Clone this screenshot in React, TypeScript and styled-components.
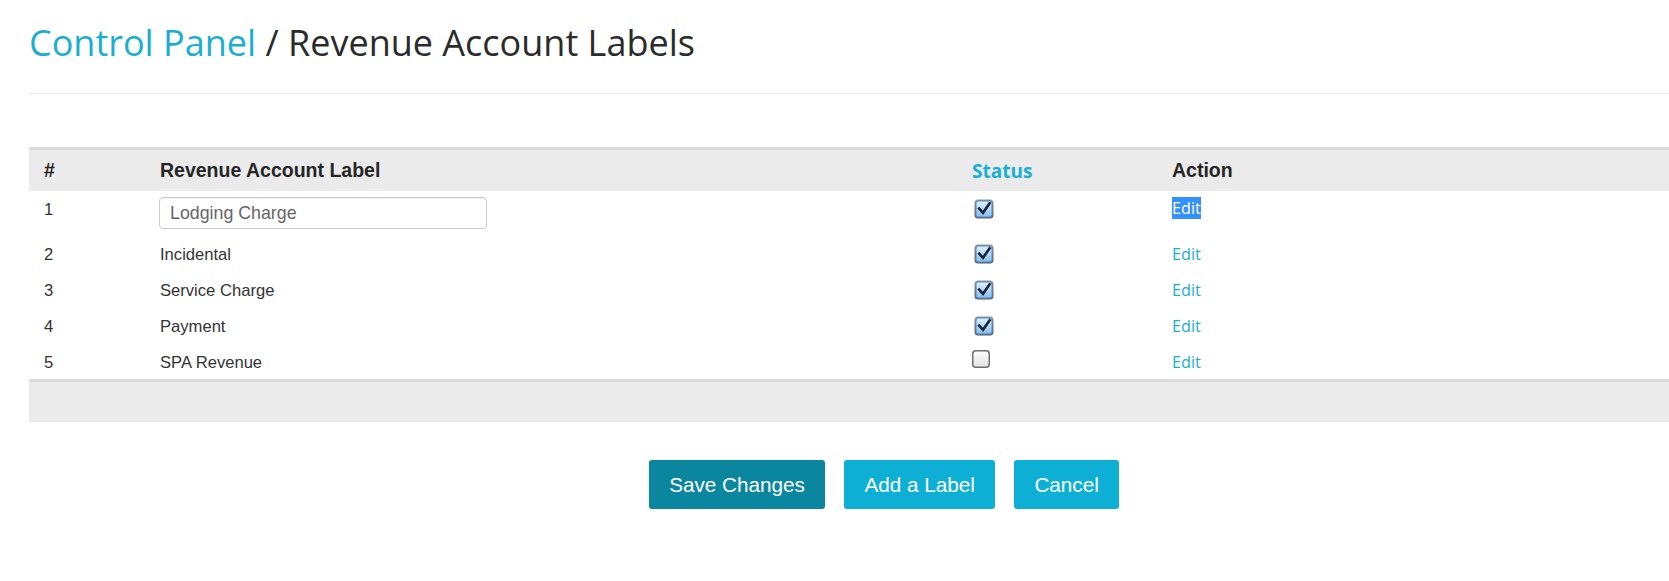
import React from "react";
import styled, { createGlobalStyle } from "styled-components";

const GlobalStyle = createGlobalStyle`
  html, body {
    margin: 0;
    padding: 0;
    background: #ffffff;
    overflow: hidden;
  }
  body {
    font-family: "Liberation Sans", Arial, sans-serif;
    color: #333333;
  }
  * { box-sizing: border-box; }
`;

const Page = styled.div`
  box-sizing: content-box;
  width: 1710px;
  padding: 23px 0 40px 29px;
`;

const Title = styled.h1`
  margin: 0;
  font-family: "Open Sans", sans-serif;
  font-weight: 400;
  font-size: 36px;
  line-height: 40px;
  color: #2b2b2b;
  white-space: nowrap;
`;

const Crumb = styled.span`
  color: #1aafd0;
`;

const Divider = styled.div`
  margin-top: 30px;
  height: 1px;
  background: #e7e7e7;
`;

const Table = styled.div`
  margin-top: 53px;
  border-top: 3px solid #dcdcdc;
`;

const Grid = styled.div<{ $top?: number; $bottom?: number }>`
  display: grid;
  grid-template-columns: 116px 812px 200px 1fr;
  padding: ${(p) => p.$top ?? 0}px 0 ${(p) => p.$bottom ?? 0}px;
`;

const HeadRow = styled(Grid)`
  height: 41px;
  align-items: center;
  background: #ebebeb;
`;

const HeadCell = styled.div<{ $accent?: boolean }>`
  padding: 0 15px;
  font-family: ${(p) => (p.$accent ? '"Open Sans", sans-serif' : '"Liberation Sans", Arial, sans-serif')};
  font-weight: 700;
  font-size: ${(p) => (p.$accent ? "19px" : "19.5px")};
  color: ${(p) => (p.$accent ? "#1aafd0" : "#262626")};
  white-space: nowrap;
`;

const BodyRow = styled(Grid)`
  align-items: start;
`;

const Cell = styled.div<{ $shift?: number }>`
  display: flex;
  align-items: flex-start;
  min-height: 22px;
  padding: ${(p) => p.$shift ?? 0}px 15px 0;
  font-size: 16.6px;
  line-height: 22px;
  color: #333333;
  white-space: nowrap;
`;

const LabelInput = styled.input`
  display: block;
  width: 328px;
  height: 32px;
  margin-left: -1px;
  padding: 0 10px;
  border: 1px solid #cccccc;
  border-radius: 4px;
  box-shadow: inset 0 1px 1px rgba(0, 0, 0, 0.075);
  font-family: "Liberation Sans", Arial, sans-serif;
  font-size: 17.8px;
  color: #666666;
  outline: none;
`;

const BoxWrap = styled.span<{ $checked: boolean }>`
  display: block;
  width: ${(p) => (p.$checked ? 20 : 18)}px;
  height: ${(p) => (p.$checked ? 20 : 18)}px;
  margin-top: ${(p) => (p.$checked ? 2 : 0)}px;
  margin-left: ${(p) => (p.$checked ? 2 : 0)}px;
`;

const EditLink = styled.a<{ $selected?: boolean }>`
  display: block;
  height: 22px;
  font-family: "Open Sans", sans-serif;
  font-size: 16.2px;
  line-height: 22px;
  color: ${(p) => (p.$selected ? "#ffffff" : "#1aafd0")};
  background: ${(p) => (p.$selected ? "#3390ff" : "transparent")};
  text-decoration: none;
  cursor: pointer;
`;

const Footer = styled.div`
  height: 43px;
  border-top: 3px solid #dcdcdc;
  background: #ebebeb;
`;

const Actions = styled.div`
  display: flex;
  justify-content: center;
  gap: 19.5px;
  margin-top: 38px;
`;

const Button = styled.button<{ $primary?: boolean }>`
  height: 49px;
  padding: 0 20px;
  border: none;
  border-radius: 3px;
  background: ${(p) => (p.$primary ? "#0a879f" : "#0db0d4")};
  color: #ffffff;
  font-family: "Liberation Sans", Arial, sans-serif;
  font-size: 20.7px;
  line-height: 49px;
  cursor: pointer;
  white-space: nowrap;
`;

const CheckBox: React.FC<{ checked: boolean }> = ({ checked }) => (
  <BoxWrap $checked={checked}>
    {checked ? (
      <svg width="20" height="20" viewBox="0 0 20 20">
        <defs>
          <linearGradient id="cbOuter" x1="0" y1="0" x2="0" y2="1">
            <stop offset="0" stopColor="#9a9a9a" />
            <stop offset="1" stopColor="#5c5c5c" />
          </linearGradient>
          <linearGradient id="cbInner" x1="0" y1="0" x2="0" y2="1">
            <stop offset="0" stopColor="#e2f1fd" />
            <stop offset="0.5" stopColor="#b4d9f7" />
            <stop offset="1" stopColor="#7fbcef" />
          </linearGradient>
        </defs>
        <rect x="0.5" y="0.5" width="19" height="19" rx="3.5" fill="url(#cbOuter)" />
        <rect x="2" y="2" width="16" height="16" rx="2" fill="url(#cbInner)" stroke="#4f86c6" strokeWidth="1" />
        <path d="M5.2 9.6 L9 13.8 L15.6 4.4" fill="none" stroke="#1c2333" strokeWidth="2.6" strokeLinecap="square" strokeLinejoin="miter" />
      </svg>
    ) : (
      <svg width="18" height="18" viewBox="0 0 18 18">
        <defs>
          <linearGradient id="cbEmpty" x1="0" y1="0" x2="0" y2="1">
            <stop offset="0" stopColor="#fdfdfd" />
            <stop offset="1" stopColor="#e4e4e4" />
          </linearGradient>
        </defs>
        <rect x="0.75" y="0.75" width="16.5" height="16.5" rx="3" fill="url(#cbEmpty)" stroke="#6e6e6e" strokeWidth="1.5" />
      </svg>
    )}
  </BoxWrap>
);

type Label = { id: number; name: string; active: boolean };

const labels: Label[] = [
  { id: 1, name: "Lodging Charge", active: true },
  { id: 2, name: "Incidental", active: true },
  { id: 3, name: "Service Charge", active: true },
  { id: 4, name: "Payment", active: true },
  { id: 5, name: "SPA Revenue", active: false },
];

export default function App() {
  return (
    <>
      <GlobalStyle />
      <Page>
        <Title>
          <Crumb>Control Panel</Crumb> / Revenue Account Labels
        </Title>
        <Divider />
        <Table>
          <HeadRow>
            <HeadCell>#</HeadCell>
            <HeadCell>Revenue Account Label</HeadCell>
            <HeadCell $accent>Status</HeadCell>
            <HeadCell>Action</HeadCell>
          </HeadRow>
          {labels.map((l, i) => {
            const editing = i === 0;
            return (
              <BodyRow key={l.id} $top={editing ? 6 : 7} $bottom={editing ? 6 : 5}>
                <Cell $shift={2}>{l.id}</Cell>
                <Cell $shift={editing ? 0 : 2}>
                  {editing ? <LabelInput defaultValue={l.name} /> : l.name}
                </Cell>
                <Cell>
                  <CheckBox checked={l.active} />
                </Cell>
                <Cell $shift={editing ? 0 : 1}>
                  <EditLink $selected={editing}>Edit</EditLink>
                </Cell>
              </BodyRow>
            );
          })}
          <Footer />
        </Table>
        <Actions>
          <Button $primary>Save Changes</Button>
          <Button>Add a Label</Button>
          <Button>Cancel</Button>
        </Actions>
      </Page>
    </>
  );
}
